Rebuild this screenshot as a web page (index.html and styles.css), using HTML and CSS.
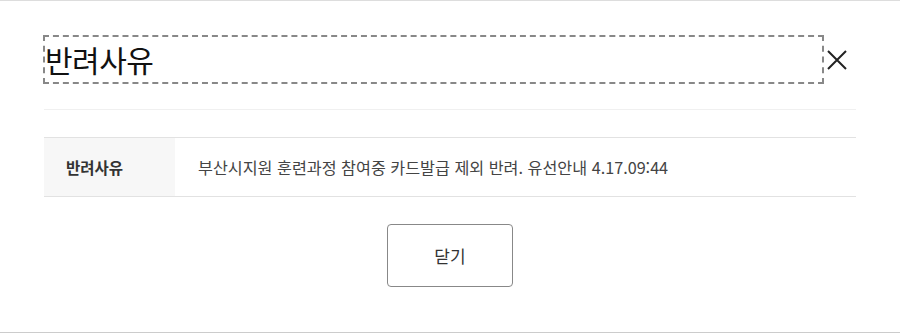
FILE: index.html
```html
<!DOCTYPE html>
<html lang="ko">
<head>
    <meta charset="UTF-8">
    <meta name="viewport" content="width=device-width, initial-scale=1.0">
    <title>반려사유</title>
    <link rel="stylesheet" href="styles.css">
</head>
<body>
    <!-- 반려사유 팝업 -->
    <div class="popup">
        <div class="popup-head">
            <h2 class="popup-title" tabindex="0">반려사유</h2>
            <button class="close-btn" aria-label="닫기">
                <svg width="20" height="20" viewBox="0 0 20 20">
                    <path d="M1 1 L19 19 M19 1 L1 19" stroke="#222" stroke-width="2" fill="none"/>
                </svg>
            </button>
        </div>

        <table class="info-table">
            <tr>
                <th>반려사유</th>
                <td>부산시지원 훈련과정 참여중 카드발급 제외 반려. 유선안내 4.17.09:44</td>
            </tr>
        </table>

        <div class="popup-foot">
            <button class="btn-close">닫기</button>
        </div>
    </div>
</body>
</html>
```

FILE: styles.css
```css
/* Reset */
* {
    margin: 0;
    padding: 0;
    box-sizing: border-box;
}

body {
    font-family: 'Noto Sans CJK KR', 'Noto Sans', sans-serif;
    background: #fff;
    color: #222;
}

/* Popup */
.popup {
    height: 333px;
    border-top: 1px solid #ddd;
    border-bottom: 1px solid #ccc;
    padding: 0 44px;
}

.popup-head {
    display: flex;
    align-items: center;
    padding: 36px 0 27px 1px;
    border-bottom: 1px solid #f0f0f0;
}

.popup-title {
    flex: 1;
    height: 45px;
    line-height: 45px;
    font-size: 30px;
    font-weight: 400;
    color: #111;
    letter-spacing: -0.5px;
    outline: 2px dashed #888;
    outline-offset: 0;
}

.close-btn {
    width: 34px;
    height: 45px;
    background: none;
    border: none;
    display: flex;
    align-items: center;
    justify-content: flex-end;
    padding-right: 9px;
    cursor: pointer;
}

/* Table */
.info-table {
    width: 100%;
    margin-top: 27px;
    border-collapse: collapse;
    border-top: 1px solid #e2e2e2;
    border-bottom: 1px solid #e2e2e2;
}

.info-table th {
    width: 131px;
    height: 59px;
    background: #f7f7f7;
    font-size: 15.5px;
    font-weight: 700;
    color: #333;
    text-align: left;
    padding-left: 22px;
}

.info-table td {
    font-size: 16.2px;
    color: #444;
    padding-left: 23px;
}

/* Footer */
.popup-foot {
    display: flex;
    justify-content: center;
    margin-top: 27px;
}

.btn-close {
    width: 126px;
    height: 63px;
    background: #fff;
    border: 1px solid #888;
    border-radius: 4px;
    font-family: inherit;
    font-size: 17px;
    color: #333;
    cursor: pointer;
}
```
